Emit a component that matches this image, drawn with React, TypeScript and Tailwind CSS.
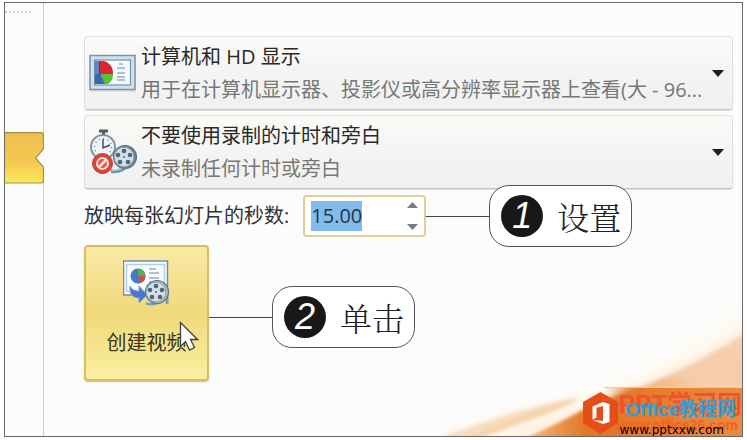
import { useEffect, useRef, useState } from 'react';
import type { ReactNode } from 'react';

type OptionBoxProps = {
  id: string;
  title: string;
  detail: string;
  icon: ReactNode;
};

type CalloutProps = {
  step: number;
  label: string;
};

const DisplayIcon = () => (
  <svg className="h-[40px] w-[48px] shrink-0" viewBox="0 0 48 40" aria-hidden="true">
    <rect x="1" y="4" width="46" height="35" rx="1" fill="#c9d3dc" opacity="0.6" />
    <rect x="1" y="2.5" width="45" height="34" fill="#cfe2f1" stroke="#7f93a6" strokeWidth="1.5" />
    <rect x="5.5" y="7" width="36" height="25" fill="#f5f9fc" stroke="#7590ab" strokeWidth="1.2" />
    <path d="M6 8h9v23H6z" fill="#5a86c6" />
    <path d="M10 8h5c6 2 9 6 9 13H10z" fill="#d9272d" />
    <path d="M15 21h9c0 5-2 8-5 10h-4c-2-2-4-5-5-7z" fill="#56c234" />
    <path d="M6 21h5l5 10H6z" fill="#3d66aa" />
    <path d="M10 21V9h1v15z" fill="#303f78" opacity="0.6" />
    <path d="M30 11h4M28 15h8M28 20h8M28 24h8M28 27h8" stroke="#9aabc2" strokeWidth="1.4" />
  </svg>
);

const FilmReel = ({ rim = '#6c8294' }: { rim?: string }) => (
  <g>
    <circle cx="0" cy="0" r="11.5" fill={rim} stroke="#5d7282" strokeWidth="1.2" />
    <circle cx="-1" cy="0" r="9.8" fill="#d3dfe7" stroke="#8ea2b0" />
    <circle cx="-1" cy="-6" r="2.3" fill="#4d6575" />
    <circle cx="5" cy="-2" r="2.3" fill="#4d6575" />
    <circle cx="3" cy="5" r="2.3" fill="#4d6575" />
    <circle cx="-5" cy="5" r="2.3" fill="#4d6575" />
    <circle cx="-7" cy="-2" r="2.3" fill="#4d6575" />
    <circle cx="-1" cy="0" r="1" fill="#4d6575" />
  </g>
);

const TimingIcon = () => (
  <svg className="h-[46px] w-[48px] shrink-0" viewBox="0 0 48 46" aria-hidden="true">
    <path d="M10 2h9M14.500 2v5" stroke="#4d5b6b" strokeWidth="3" />
    <circle cx="14" cy="18" r="12" fill="#f1f6fb" stroke="#8293a3" strokeWidth="2" />
    <circle cx="14" cy="18" r="8.500" fill="none" stroke="#66788a" strokeWidth="1.5" strokeDasharray="1 3.450" />
    <path d="M14 10v9l7-3" fill="none" stroke="#34485c" strokeWidth="1.4" />
    <path d="M22 42c9 1 14-3 16-7" fill="none" stroke="#7394aa" strokeWidth="4" />
    <path d="M23 41c8 0 11-2 13-5" fill="none" stroke="#c7dce8" strokeWidth="1.5" />
    <g transform="translate(36 28)">
      <FilmReel />
    </g>
    <circle cx="13.500" cy="34.500" r="10" fill="#d84435" stroke="#c33c30" />
    <circle cx="13.500" cy="34.500" r="5.500" fill="#e65b48" stroke="#f8dfd7" strokeWidth="2" />
    <path d="M9.500 38.500l8-8" stroke="#f8dfd7" strokeWidth="2.500" />
  </svg>
);

const CreateVideoIcon = () => (
  <svg className="h-[48px] w-[48px]" viewBox="2 0 48 48" aria-hidden="true">
    <rect x="2.500" y="2" width="44" height="34" fill="#f8fbff" stroke="#7d8a9a" strokeWidth="1.5" />
    <rect x="5.500" y="5.500" width="38" height="27" fill="none" stroke="#b4cfe8" strokeWidth="1.500" />
    <circle cx="17" cy="17" r="7.500" fill="#4778c7" />
    <path d="M17 17V9.500a7.500 7.500 0 0 1 7.500 7.500z" fill="#4eb155" />
    <path d="M17 17h7.500a7.500 7.500 0 0 1-5 7z" fill="#d54c40" />
    <path d="M28 10h7M28 14h10M28 19h10M28 23h7" stroke="#9eabc0" strokeWidth="1.300" />
    <path d="M9 27c2 4 5 5 9 5v-5l8 9-8 8v-5c-6 0-10-4-9-12z" fill="#4a74cf" stroke="#7f9fe2" />
    <path d="M25 44c8 3 15-1 18-5l3-1v7" fill="none" stroke="#7e9fac" strokeWidth="3" />
    <path d="M26 43c7 2 13-1 17-5" fill="none" stroke="#d0e3e8" strokeWidth="1" />
    <g transform="translate(36 33)">
      <FilmReel rim="#a9b9c3" />
    </g>
  </svg>
);

const SectionTab = () => (
  <svg className="relative mt-[119px] -mr-px h-[52px] w-[39px] shrink-0 self-end" viewBox="0 0 39 52" aria-hidden="true">
    <defs>
      <linearGradient id="tab-fill" x1="0" y1="0" x2="0" y2="1">
        <stop offset="0" stopColor="#eebd50" />
        <stop offset="0.6" stopColor="#f3c950" />
        <stop offset="1" stopColor="#faea58" />
      </linearGradient>
    </defs>
    <path d="M39 17v18h-2l-7-9 7-9z" fill="#fbfcfc" />
    <path
      d="M-1 .700h37q2.500 0 2.500 2.500v13.800l-8 9 8 9v13.500q0 2.500-2.500 2.500H-1z"
      fill="url(#tab-fill)"
      stroke="#a88a48"
      strokeWidth="1.200"
    />
  </svg>
);

const BackgroundWave = () => (
  <svg
    className="pointer-events-none absolute right-0 bottom-0 h-[175px] w-[342px]"
    viewBox="400 260 342 175"
    aria-hidden="true"
  >
    <defs>
      <linearGradient id="wave-strong" x1="0" y1="0" x2="1" y2="0">
        <stop offset="0" stopColor="#f6c490" />
        <stop offset="0.3" stopColor="#df7825" />
        <stop offset="0.6" stopColor="#e2762b" />
        <stop offset="1" stopColor="#f09b52" />
      </linearGradient>
      <linearGradient id="wave-pale" x1="0" y1="1" x2="1" y2="0">
        <stop offset="0" stopColor="#f0ab6e" />
        <stop offset="0.3" stopColor="#f5ccaa" />
        <stop offset="1" stopColor="#f6cfae" />
      </linearGradient>
      <filter id="soft" x="-20%" y="-20%" width="140%" height="140%">
        <feGaussianBlur stdDeviation="7" />
      </filter>
      <filter id="edge" x="-20%" y="-20%" width="140%" height="140%">
        <feGaussianBlur stdDeviation="2" />
      </filter>
    </defs>
    <path d="M410 440Q530 402 600 385Q690 350 750 298V450H410z" fill="#fffaf1" filter="url(#soft)" />
    <path d="M600 400Q685 370 750 322V400z" fill="#fcecd9" filter="url(#soft)" />
    <path d="M430 441Q505 410 580 396L552 412Q510 428 470 441z" fill="#f7ddbc" filter="url(#edge)" />
    <path d="M470 438Q530 413 575 400" fill="none" stroke="#efc492" strokeWidth="2" filter="url(#edge)" />
    <path d="M515 440Q580 408 632 388H750V445z" fill="url(#wave-strong)" filter="url(#edge)" />
    <path d="M640 387Q695 364 750 330V387z" fill="url(#wave-pale)" filter="url(#edge)" />
    <path d="M488 439Q540 419 598 396Q565 420 520 439z" fill="#fff3e2" filter="url(#edge)" />
  </svg>
);

const Watermark = () => (
  <div className="absolute right-0 bottom-0 flex h-[49px] w-[162px] items-end justify-end overflow-hidden">
    <div className="absolute inset-y-0 right-0 w-[138px] border-t border-[#f6c59b] bg-linear-to-r from-transparent via-[#e67829] via-25% to-[#ed8a41]" />
    <div className="absolute right-0 bottom-1 text-right font-['Liberation_Sans','Noto_Sans_CJK_SC',sans-serif] font-bold whitespace-nowrap">
      <p className="text-[25px] leading-[28px] text-[#ef542c]">PPT学习网</p>
      <p className="mr-1 text-[14px] leading-[14px] text-[#ee6426]">www.office26.com</p>
    </div>
    <svg className="absolute bottom-[2px] left-[2px] h-[42px] w-[37px]" viewBox="0 0 37 42" aria-hidden="true">
      <path d="M18.500 0L36 10v21L18.500 42 1 31V10z" fill="#e64d17" />
      <path d="M10.500 14.500L21 10l6.500 2v18L21 32l-10.500-4L21 29V14l-6.500 1.700v10l-4 1.800z" fill="#fff" />
    </svg>
    <div className="relative mr-1.5 text-right">
      <p className="font-['Liberation_Sans','Noto_Sans_CJK_SC',sans-serif] text-[19px] leading-[28px] font-bold whitespace-nowrap text-[#2aa0dc]">
        Office教程网
      </p>
      <p className="mr-3 font-['DejaVu_Sans',sans-serif] text-[12px] leading-[12px] text-black">www.pptxxw.com</p>
    </div>
  </div>
);

const OptionBox = ({ id, title, detail, icon }: OptionBoxProps) => (
  <div className="relative flex h-[74px] items-center gap-1 rounded border border-[#dedede] border-b-[#c4c4c4] bg-linear-to-b from-[#fbfcf7] via-[#f4f4f4] to-[#f0f0f0] pr-2 pl-1 shadow-[0_1px_0_#dddddd]">
    {icon}
    <label htmlFor={id} className="min-w-0 flex-1 leading-[33px] text-[#292929]">
      <span className="block truncate">{title}</span>
      <span className="block truncate text-[#777777]">{detail}</span>
    </label>
    <svg className="h-[7px] w-[12px] shrink-0" viewBox="0 0 12 7" aria-hidden="true">
      <path d="M0 0h12L6 7z" fill="#1d1d1d" />
    </svg>
    <select id={id} className="absolute inset-0 cursor-pointer opacity-0">
      <option>{title}</option>
    </select>
  </div>
);

const Callout = ({ step, label }: CalloutProps) => (
  <div className="relative flex items-center">
    <span className="h-px w-[63px] bg-[#444444]" />
    <div className="flex h-[62px] items-center gap-3.5 rounded-[20px] border border-[#555555] bg-white pr-2.5 pl-[11px]">
      <span className="flex size-[42px] items-center justify-center rounded-full bg-[#181818] font-['Liberation_Sans',sans-serif] text-[36px] leading-none text-white italic">
        {step}
      </span>
      <span className="font-['Noto_Serif_CJK_SC','Noto_Sans_CJK_SC',serif] text-[32px] leading-none font-light whitespace-nowrap text-[#202020]">
        {label}
      </span>
    </div>
  </div>
);

const App = () => {
  const [seconds, setSeconds] = useState(15);
  const inputRef = useRef<HTMLInputElement>(null);

  useEffect(() => {
    inputRef.current?.focus();
    inputRef.current?.select();
  }, []);

  return (
    <div className="flex min-h-screen bg-white pt-[2px] pr-1 pb-[3px] pl-1 font-['Open_Sans','Noto_Sans_CJK_SC',sans-serif] text-[20px]">
      <main className="relative flex flex-1 overflow-hidden border border-[#686868] bg-[#fbfcfc]">
        <aside className="flex w-[39px] shrink-0 flex-col border-r border-[#c9cacb] pt-2">
          <div className="mr-3 border-t-2 border-dotted border-[#d2d2d2]" />
          <SectionTab />
        </aside>
        <BackgroundWave />
        <section className="relative min-w-0 flex-1 pt-[33px] pr-[9px] pl-10">
          <div className="flex flex-col gap-[5px]">
            <OptionBox
              id="quality"
              title="计算机和 HD 显示"
              detail="用于在计算机显示器、投影仪或高分辨率显示器上查看(大 - 96..."
              icon={<DisplayIcon />}
            />
            <OptionBox id="timings" title="不要使用录制的计时和旁白" detail="未录制任何计时或旁白" icon={<TimingIcon />} />
          </div>

          <div className="mt-1.5 flex h-[42px] items-center">
            <label htmlFor="seconds" className="mr-3.5 whitespace-nowrap text-[#333333]">
              放映每张幻灯片的秒数:
            </label>
            <div className="flex h-[42px] w-[123px] items-center rounded border-2 border-[#dfcf94] bg-white px-1.5">
              <input
                id="seconds"
                ref={inputRef}
                value={seconds.toFixed(2)}
                onChange={(e) => setSeconds(Number(e.target.value) || 0)}
                className="min-w-0 flex-1 bg-transparent text-[#263544] outline-none selection:bg-[#82bcec] selection:text-[#263544]"
              />
              <div className="flex flex-col gap-1.5">
                <button type="button" aria-label="+" onClick={() => setSeconds(seconds + 1)} className="flex h-4 items-center">
                  <svg className="h-[6px] w-[11px]" viewBox="0 0 11 6">
                    <path d="M0 6h11L5.500 0z" fill="#777b83" />
                  </svg>
                </button>
                <button type="button" aria-label="-" onClick={() => setSeconds(Math.max(0, seconds - 1))} className="flex h-4 items-center">
                  <svg className="h-[6px] w-[11px]" viewBox="0 0 11 6">
                    <path d="M0 0h11L5.500 6z" fill="#777b83" />
                  </svg>
                </button>
              </div>
            </div>
            <Callout step={1} label="设置" />
          </div>

          <div className="mt-2 flex items-center">
            <button
              type="button"
              className="relative flex h-[136px] w-[125px] flex-col items-center rounded border-2 border-[#d9bd61] bg-linear-to-b from-[#f8e9a5] via-[#f1d97a] via-50% to-[#faefa1] pt-3 text-[#39351f] shadow-[0_1px_1px_#cabd83]"
            >
              <CreateVideoIcon />
              <span className="mt-5 leading-[32px]">创建视频</span>
              <svg className="absolute right-2 bottom-[26px] h-[32px] w-[20px]" viewBox="0 0 20 32" aria-hidden="true">
                <path d="M1.500 1.500v24l5-5 4 8.500 5-2.500-4-8h7z" fill="#fff" stroke="#45412f" strokeWidth="1.300" />
              </svg>
            </button>
            <div className="pt-2">
              <Callout step={2} label="单击" />
            </div>
          </div>
        </section>
        <Watermark />
      </main>
    </div>
  );
};

export default App;
